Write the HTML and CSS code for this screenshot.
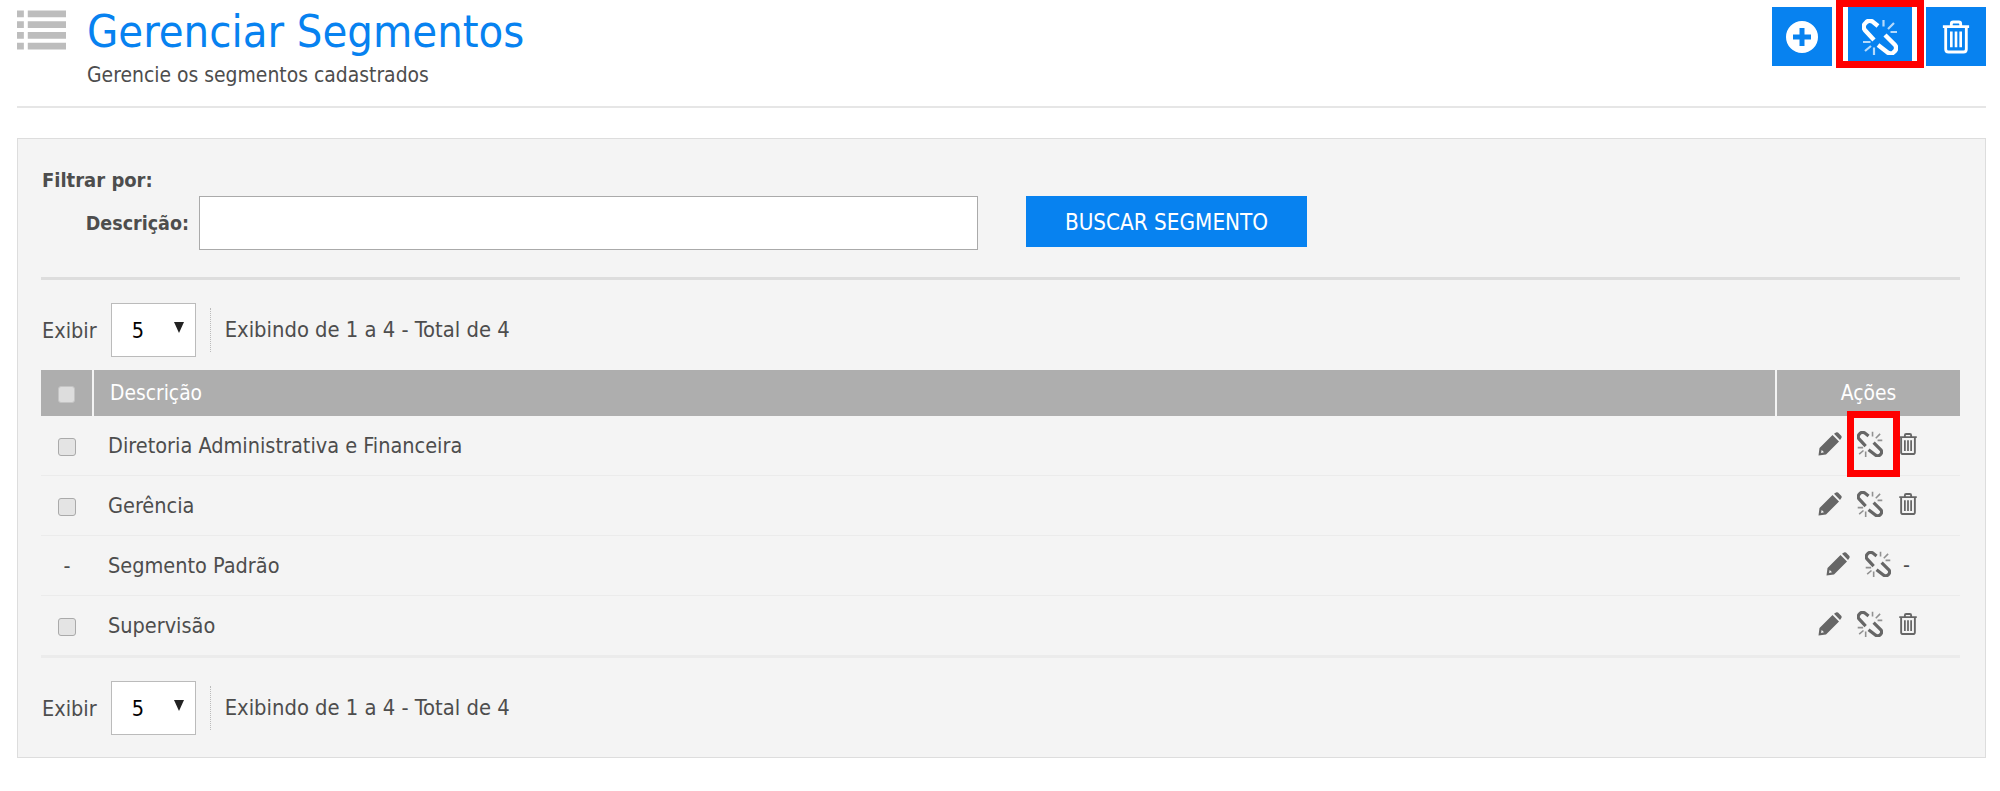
FILE: index.html
```html
<!DOCTYPE html>
<html lang="pt-BR">
  <head>
    <meta charset="UTF-8" />
    <title>Gerenciar Segmentos</title>
    <link rel="stylesheet" href="styles.css">
  </head>
  <body>
    <svg class="sprites" width="0" height="0">
      <symbol id="i-unlink" viewBox="0 0 36 36">
        <path d="M16 7 L10.500 2.500 Q7 .8 4.500 3 L2.800 4.800 Q.5 8 2.800 11 L12 21 M23 16 L33 26 Q35.300 29 33 32 L31 33.800 Q28 35.500 25 33 L16 26" fill="none" stroke="currentColor" stroke-width="4.400"/>
        <path d="M21.500 1 V7.500 M32 4 L26 10 M35 13 H28.500 M1 23 H8.500 M3 32 L9 27 M12 36 V28.500" fill="none" stroke="currentColor" stroke-width="2.200" opacity=".7"/>
      </symbol>
      <symbol id="i-trash" viewBox="0 0 32 36">
        <path d="M2 7 H30 M11 7 V4 Q11 2 13 2 H19 Q21 2 21 4 V7 M5 7 V31 Q5 34 8 34 H24 Q27 34 27 31 V7" fill="none" stroke="currentColor" stroke-width="3"/>
        <path d="M11 12 V29 M16 12 V29 M21 12 V29" fill="none" stroke="currentColor" stroke-width="2.800"/>
      </symbol>
      <symbol id="i-pencil" viewBox="0 0 24 24">
        <path d="M.5 23.500 L1.500 16 L14.500 3 L21 9.500 L8 22.500 Z M16 1.800 L18 .4 Q19 0 20 .6 L23.400 4 Q24 5 23.400 6 L22 8 Z" fill="currentColor"/>
        <path d="M3 21 L3.700 18 L6 20.300 Z" fill="#f4f4f4"/>
      </symbol>
      <symbol id="i-plus" viewBox="0 0 32 32">
        <path fill-rule="evenodd" d="M16 0 A16 16 0 1 1 16 32 A16 16 0 1 1 16 0 Z M13.500 7 V13.500 H7 V18.500 H13.500 V25 H18.500 V18.500 H25 V13.500 H18.500 V7 Z" fill="currentColor"/>
      </symbol>
    </svg>

    <header class="page-header">
      <svg class="list-icon" width="49" height="40" viewBox="0 0 50 40">
        <path d="M0 0 H7 V7 H0 Z M11 0 H50 V7 H11 Z M0 11 H7 V18 H0 Z M11 11 H50 V18 H11 Z M0 22 H7 V29 H0 Z M11 22 H50 V29 H11 Z M0 33 H7 V40 H0 Z M11 33 H50 V40 H11 Z" fill="#bdbdbd"/>
      </svg>
      <div class="titles">
        <h1>Gerenciar Segmentos</h1>
        <p>Gerencie os segmentos cadastrados</p>
      </div>
      <div class="top-actions">
        <button class="top-btn"><svg width="32" height="32"><use href="#i-plus"/></svg></button>
        <span class="marked marked-top">
          <button class="top-btn"><svg width="36" height="36"><use href="#i-unlink"/></svg></button>
        </span>
        <button class="top-btn"><svg width="30" height="34"><use href="#i-trash"/></svg></button>
      </div>
    </header>

    <main class="panel">
      <div class="filter">
        <strong class="filter-title">Filtrar por:</strong>
        <div class="filter-row">
          <label for="descricao">Descrição:</label>
          <input id="descricao" type="text" />
          <button class="search-btn">BUSCAR SEGMENTO</button>
        </div>
      </div>

      <div class="pager">
        <span>Exibir</span>
        <div class="page-size"><span>5</span><i></i></div>
        <span class="pager-info">Exibindo de 1 a 4 - Total de 4</span>
      </div>

      <table class="grid">
        <thead>
          <tr>
            <th class="col-check"><span class="check check-head"></span></th>
            <th class="col-name">Descrição</th>
            <th class="col-actions">Ações</th>
          </tr>
        </thead>
        <tbody>
          <tr>
            <td class="col-check"><span class="check"></span></td>
            <td class="col-name">Diretoria Administrativa e Financeira</td>
            <td class="col-actions">
              <div class="row-actions">
                <svg class="pencil" width="24" height="24"><use href="#i-pencil"/></svg>
                <span class="marked marked-row"><svg class="unlink" width="26" height="26"><use href="#i-unlink"/></svg></span>
                <svg class="trash" width="20" height="24"><use href="#i-trash"/></svg>
              </div>
            </td>
          </tr>
          <tr>
            <td class="col-check"><span class="check"></span></td>
            <td class="col-name">Gerência</td>
            <td class="col-actions">
              <div class="row-actions">
                <svg class="pencil" width="24" height="24"><use href="#i-pencil"/></svg>
                <svg class="unlink" width="26" height="26"><use href="#i-unlink"/></svg>
                <svg class="trash" width="20" height="24"><use href="#i-trash"/></svg>
              </div>
            </td>
          </tr>
          <tr>
            <td class="col-check">-</td>
            <td class="col-name">Segmento Padrão</td>
            <td class="col-actions">
              <div class="row-actions">
                <svg class="pencil" width="24" height="24"><use href="#i-pencil"/></svg>
                <svg class="unlink" width="26" height="26"><use href="#i-unlink"/></svg>
                <span class="no-trash">-</span>
              </div>
            </td>
          </tr>
          <tr>
            <td class="col-check"><span class="check"></span></td>
            <td class="col-name">Supervisão</td>
            <td class="col-actions">
              <div class="row-actions">
                <svg class="pencil" width="24" height="24"><use href="#i-pencil"/></svg>
                <svg class="unlink" width="26" height="26"><use href="#i-unlink"/></svg>
                <svg class="trash" width="20" height="24"><use href="#i-trash"/></svg>
              </div>
            </td>
          </tr>
        </tbody>
      </table>

      <div class="pager pager-bottom">
        <span>Exibir</span>
        <div class="page-size"><span>5</span><i></i></div>
        <span class="pager-info">Exibindo de 1 a 4 - Total de 4</span>
      </div>
    </main>
  </body>
</html>
```

FILE: styles.css
```css
body {
  margin: 0;
  padding: 0 14px 0 17px;
  background-color: #fff;
  color: #4d4d4d;
  font-family: "DejaVu Sans Condensed", "DejaVu Sans", sans-serif;
  font-stretch: condensed;
  font-size: 21.5px;
}
.sprites {
  position: absolute;
}
.page-header {
  display: flex;
  height: 106px;
  border-bottom: 2px solid #e6e6e6;
}
.list-icon {
  margin: 10px 21px 0 0;
}
.titles h1 {
  margin: 8px 0 0;
  color: #0782f0;
  font-size: 44.9px;
  font-weight: normal;
  line-height: 48px;
}
.titles p {
  margin: 7px 0 0;
  font-size: 20.9px;
  line-height: 24px;
}
.top-actions {
  display: flex;
  align-items: flex-start;
  margin-left: auto;
  padding-top: 7px;
}
.top-btn {
  display: flex;
  align-items: center;
  justify-content: center;
  width: 60px;
  height: 59px;
  padding: 0;
  border: 0;
  background-color: #0782f0;
  color: #fff;
}
.marked {
  position: relative;
  display: inline-block;
}
.marked::after {
  content: "";
  position: absolute;
  border: 7px solid #f00;
}
.marked-top {
  margin: 0 14px 0 16px;
}
.marked-top .top-btn {
  width: 64px;
}
.marked-top::after {
  top: -7px;
  right: -12px;
  bottom: -2px;
  left: -12px;
}
.panel {
  margin-top: 30px;
  height: 618px;
  padding: 0 25px 0 23px;
  border: 1px solid #ddd;
  background-color: #f4f4f4;
}
.filter {
  height: 138px;
  border-bottom: 3px solid #ddd;
}
.filter-title {
  display: block;
  padding: 30px 0 0 1px;
  font-size: 20px;
  line-height: 22px;
}
.filter-row {
  display: flex;
  align-items: flex-start;
  margin-top: 5px;
}
.filter-row label {
  width: 148px;
  padding-top: 16px;
  font-size: 19.5px;
  font-weight: bold;
  text-align: right;
}
.filter-row input {
  width: 779px;
  height: 54px;
  margin-left: 10px;
  padding: 0;
  border: 1px solid #aaa;
  box-sizing: border-box;
  background-color: #fff;
}
.search-btn {
  width: 281px;
  height: 51px;
  margin-left: 48px;
  border: 0;
  background-color: #0782f0;
  color: #fff;
  font-family: inherit;
  font-stretch: inherit;
  font-size: 22.3px;
}
.pager {
  display: flex;
  align-items: center;
  height: 54px;
  margin-top: 23px;
  padding-left: 1px;
}
.page-size {
  display: flex;
  align-items: center;
  justify-content: space-between;
  width: 85px;
  height: 54px;
  margin-left: 14px;
  padding: 0 11px 0 20px;
  border: 1px solid #bbb;
  box-sizing: border-box;
  background-color: #fff;
  color: #000;
}
.page-size i {
  width: 0;
  height: 0;
  margin-bottom: 6px;
  border-top: 11px solid #222;
  border-right: 5px solid transparent;
  border-left: 5px solid transparent;
}
.pager-info {
  height: 44px;
  margin-left: 14px;
  padding-left: 14px;
  border-left: 1px dotted #bbb;
  font-size: 21.8px;
  line-height: 44px;
}
.pager-bottom {
  margin-top: 23px;
}
.grid {
  width: 100%;
  margin-top: 13px;
  border-collapse: collapse;
}
.grid th {
  height: 46px;
  padding: 0;
  border-left: 2px solid #f4f4f4;
  background-color: #aeaeae;
  color: #fff;
  font-size: 20.8px;
  font-weight: normal;
}
.grid th:first-child {
  border-left: 0;
}
.grid td {
  height: 59px;
  padding: 0;
  border-bottom: 1px solid #ebebeb;
}
.grid tbody tr:last-child td {
  border-bottom: 3px solid #ebebeb;
}
.col-check {
  width: 51px;
  text-align: center;
}
.grid .col-name {
  padding-left: 15px;
  text-align: left;
}
.grid th.col-name {
  padding-left: 16px;
}
.col-actions {
  width: 183px;
  text-align: center;
}
.check {
  display: inline-block;
  width: 18px;
  height: 18px;
  border: 1px solid #aaa;
  border-radius: 3px;
  box-sizing: border-box;
  background-color: #e4e4e4;
  vertical-align: middle;
}
.check-head {
  width: 17px;
  height: 17px;
  border-color: #c4c4c4;
  background-color: #ddd;
}
.row-actions {
  display: flex;
  align-items: center;
  justify-content: center;
  gap: 15px;
  padding-bottom: 3px;
  color: #666;
}
.no-trash {
  margin-left: -3px;
  color: #4d4d4d;
}
.marked-row {
  display: flex;
}
.marked-row::after {
  top: -20px;
  right: -17px;
  bottom: -20px;
  left: -10px;
}
```
